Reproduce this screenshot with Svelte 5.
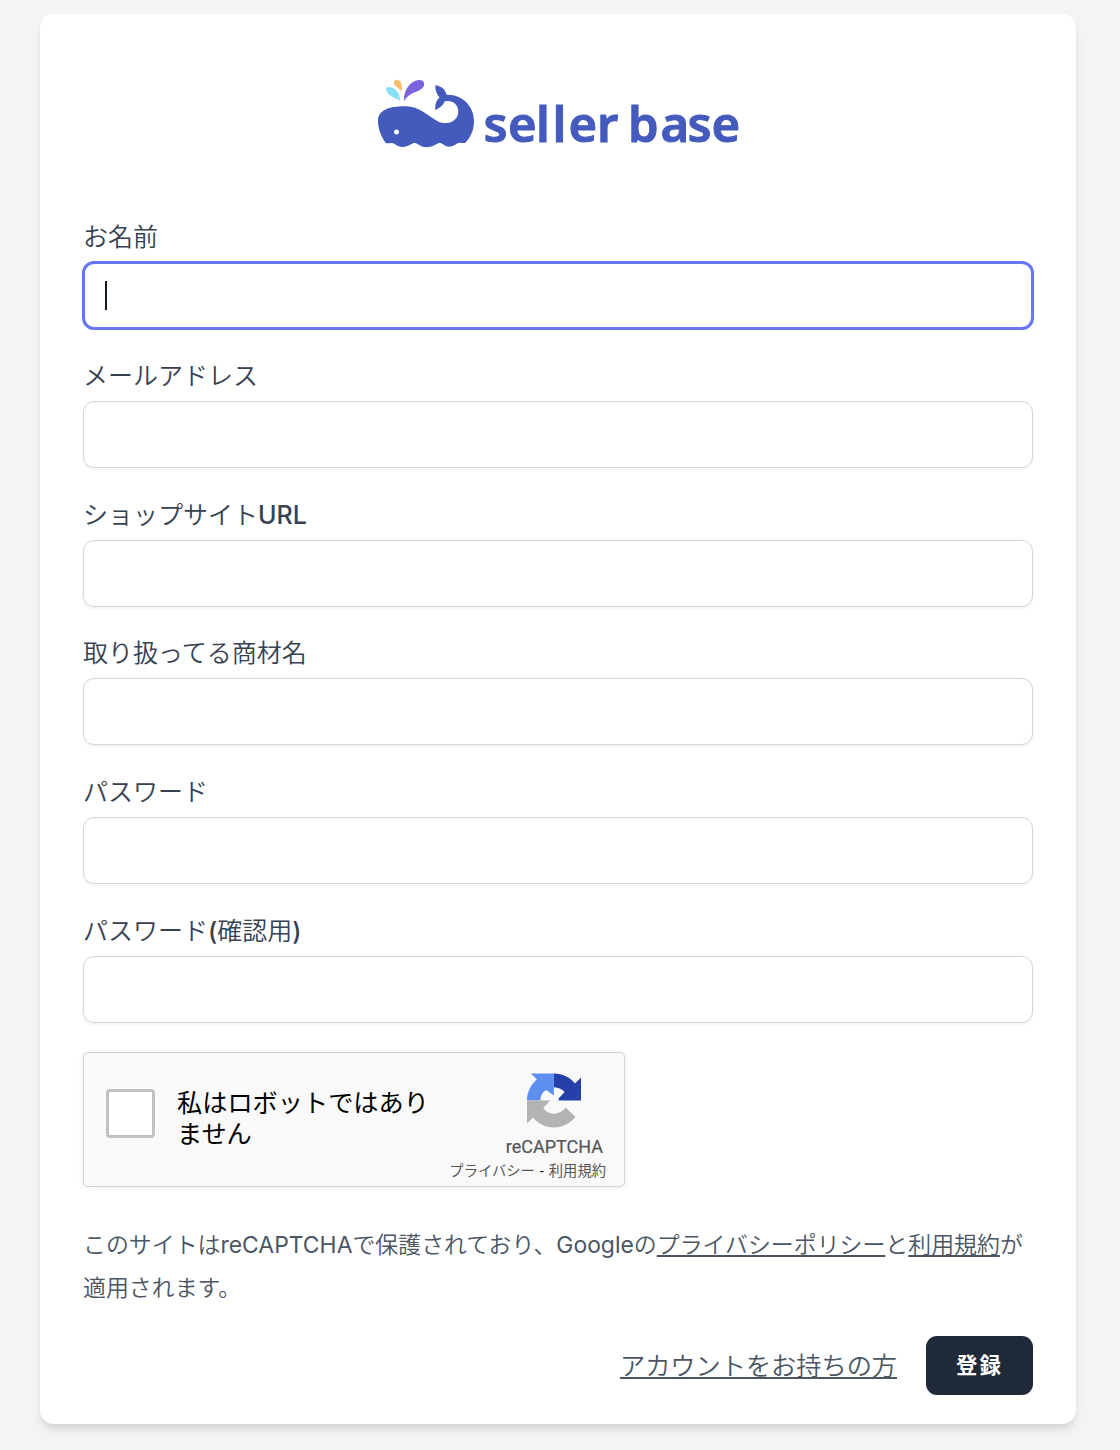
<script lang="ts">
    const fields: { id: string, label: string, type: string }[] = [
        { id: "name", label: "お名前", type: "text" },
        { id: "email", label: "メールアドレス", type: "email" },
        { id: "shop_url", label: "ショップサイトURL", type: "text" },
        { id: "product", label: "取り扱ってる商材名", type: "text" },
        { id: "password", label: "パスワード", type: "password" },
        { id: "password_confirmation", label: "パスワード(確認用)", type: "password" },
    ];
    let active = $state("name");
    let values: Record<string, string> = $state({});
    // odd entries are the latin runs, they get a heavier weight than the kana
    const runs = (label: string) => label.split(/([A-Za-z()]+)/);
</script>

<main class="page">
    <form class="card">
        <div class="brand">
            <svg class="logo" viewBox="370 70 380 90" role="img" aria-label="seller base">
                <path fill="#86e0f5" d="M386 88.200C388.500 84.800 400.500 89 400 101C396 97.500 386.500 96.500 386 88.200Z" />
                <path fill="#f8bc6c" d="M394.200 81C398 77.500 403.500 82 401.600 91.500C399.500 87.500 392.500 86.500 394.200 81Z" />
                <path fill="#7c62dc" d="M404 101C403.500 91 410 80.200 419.500 80C424.500 80 425.500 84.800 422.500 88C418 93 409.500 91.500 404 101Z" />
                <path fill="#445abc" d="M435.300 85.300C440.500 86 445.500 89 446.500 94.700C461 94 474 105 474 121C474 131 469.800 138.500 465 143C461.500 143.200 459.500 142 457.500 143.300C452 147.500 447.500 147.800 443.500 144.500C440.800 142.200 438.500 142.500 435.700 144.500C429.500 148.500 421.500 147.500 418.500 144.500C415.500 142.200 413.500 142.500 410.500 144.500C405 148.200 398 147.500 394.500 143.800C391.500 142 389 143.700 386 143.200C381.500 137.500 378 129 378 121C378 110 389 106 406 106.200C419 106.300 427 115 438 121.500C448.500 126 458.500 120.500 458.300 111.500C458 103.500 451.500 99.800 444.500 101.500C443.500 105 440 108 435.300 110C435 104.500 436 100.500 439.500 97.500C436.500 94 435 90 435.300 85.300Z" />
                <circle cx="396.500" cy="132" r="2.500" fill="#fff" />
                <text class="wordmark" x="483.500 508 536 552.500 568.500 597 614 628 660.500 687.500 711.500" y="141.800">seller base</text>
            </svg>
        </div>

        {#each fields as field}
            <div class="field">
                <label for={field.id}>{#each runs(field.label) as run, i}{#if i % 2}<span>{run}</span>{:else}{run}{/if}{/each}</label>
                <div class="control" class:focused={active === field.id}>
                    <input id={field.id} type={field.type} bind:value={values[field.id]} onfocus={() => (active = field.id)} />
                    {#if active === field.id && !values[field.id]}
                        <span class="caret"></span>
                    {/if}
                </div>
            </div>
        {/each}

        <div class="captcha">
            <span class="checkbox"></span>
            <p class="robot">私はロボットではあり<br />ません</p>
            <div class="captcha-brand">
                <svg viewBox="0 0 64 64">
                    <path fill="#2540a8" d="M64 31.955V4.687l-7.160 7.160C50.948 4.674 42.033.093 32.050.093l-.350.003v16.200c6 .1 10.500 2.700 12.872 5.720l-6.900 7.200 0 2.740z" />
                    <path fill="#5c8ff0" d="M31.862.094H4.594l7.160 7.160C4.580 13.114 0 22.030 0 32.012h16c-.3-2.250.25-4.350 1.250-6.250 1-2.700 3-4.800 5.500-6.200l9.109 6.500z" />
                    <path fill="#b3b3b3" d="M.001 32.045v27.270l7.160-7.160c5.860 7.173 14.774 11.754 24.757 11.754 10.390 0 19.622-4.960 25.464-12.639L45.645 40.410c-3 4.300-7.500 7.100-13.727 7.246-5.500-.1-10-3.134-12.600-7.210l8.308-8.401z" />
                </svg>
                <div class="captcha-name">reCAPTCHA</div>
                <div class="captcha-links">プライバシー<span>-</span>利用規約</div>
            </div>
        </div>

        <p class="notice">このサイトは<span>reCAPTCHA</span>で保護されており、<span>Google</span>の<a href="#privacy">プライバシーポリシー</a>と<a href="#terms">利用規約</a>が<br />適用されます。</p>

        <div class="actions">
            <a href="#login">アカウントをお持ちの方</a>
            <button type="button">登録</button>
        </div>
    </form>
</main>

<style>
    :global(body) {
        background: #f3f4f6;
    }
    .page {
        box-sizing: border-box;
        height: 1450px;
        padding: 14px 44px 26px 40px;
        overflow: hidden;
        font-family: Inter, "Noto Sans CJK JP", sans-serif;
        color: #4b5563;
    }
    .card {
        box-sizing: border-box;
        height: 1410px;
        padding: 56px 43px 0;
        border-radius: 14px;
        background: #fff;
        box-shadow: 0 7px 11px -2px rgba(0, 0, 0, .1), 0 4px 7px -2px rgba(0, 0, 0, .07);
    }
    .brand {
        height: 144px;
        padding-left: 287px;
    }
    .logo {
        display: block;
        width: 380px;
        height: 90px;
    }
    .wordmark {
        font-family: "Noto Sans", sans-serif;
        font-size: 49px;
        font-weight: 600;
        fill: #445abc;
        stroke: #445abc;
        stroke-width: 1;
        stroke-linejoin: round;
    }
    .field {
        height: 138.750px;
    }
    label {
        display: block;
        height: 48px;
        padding-top: 5px;
        box-sizing: border-box;
        line-height: 37px;
        font-size: 25px;
        font-weight: 350;
        color: #374151;
        white-space: nowrap;
    }
    label span {
        font-weight: 500;
    }
    .control {
        position: relative;
        box-sizing: border-box;
        height: 67px;
        border: 1px solid #d1d5db;
        border-radius: 11px;
        box-shadow: 0 2px 3px rgba(0, 0, 0, .05);
    }
    .control.focused {
        height: 69px;
        margin: -1px;
        border: 3px solid #6875f5;
        border-radius: 12px;
        box-shadow: none;
    }
    input {
        display: block;
        box-sizing: border-box;
        width: 100%;
        height: 100%;
        padding: 0 20px;
        border: 0;
        outline: 0;
        background: transparent;
        font: inherit;
        font-size: 28px;
    }
    .caret {
        position: absolute;
        left: 20px;
        top: 17px;
        width: 2px;
        height: 29px;
        background: #111827;
    }
    .captcha {
        display: flex;
        box-sizing: border-box;
        width: 542px;
        height: 135px;
        margin-top: 5px;
        border: 1px solid #d3d3d3;
        border-radius: 5px;
        background: #f9f9f9;
        box-shadow: 0 1px 6px rgba(0, 0, 0, .08);
    }
    .checkbox {
        box-sizing: border-box;
        width: 49px;
        height: 49px;
        margin: 36px 0 0 22px;
        border: 3px solid #c1c1c1;
        border-radius: 4px;
        background: #fff;
    }
    .robot {
        width: 264px;
        margin: 35px 0 0 22px;
        font-family: Roboto, "Noto Sans CJK JP", sans-serif;
        font-size: 25.200px;
        line-height: 31px;
        color: #000;
    }
    .captcha-brand {
        display: flex;
        flex-direction: column;
        align-items: flex-end;
        width: 165px;
        padding-top: 20px;
        color: #555;
        font-family: Roboto, "Noto Sans CJK JP", sans-serif;
        white-space: nowrap;
    }
    .captcha-brand svg {
        width: 54px;
        height: 55px;
        margin-right: 25px;
    }
    .captcha-name {
        margin-top: 8px;
        margin-right: 3px;
        font-size: 18px;
        line-height: 22px;
        -webkit-text-stroke: .2px #555;
    }
    .captcha-links {
        margin-top: 3px;
        font-size: 14.300px;
        line-height: 20px;
    }
    .captcha-links span {
        margin: 0 5px;
        color: #000;
    }
    .notice {
        margin: 37px 0 0;
        font-size: 22.920px;
        font-weight: 350;
        line-height: 43px;
        white-space: nowrap;
    }
    .notice span {
        font-weight: 400;
    }
    a {
        color: inherit;
        text-decoration-thickness: 2px;
        text-underline-offset: 2px;
    }
    .actions {
        display: flex;
        align-items: center;
        justify-content: flex-end;
        gap: 29px;
        margin-top: 26px;
        font-size: 25.200px;
        font-weight: 350;
    }
    .actions a {
        padding-bottom: 2px;
    }
    button {
        width: 107px;
        height: 59px;
        padding: 0 0 4px;
        border: 0;
        border-radius: 11px;
        background: #1f2937;
        color: #fff;
        font-family: inherit;
        font-size: 21.400px;
        font-weight: 600;
        letter-spacing: 2.100px;
    }
</style>
